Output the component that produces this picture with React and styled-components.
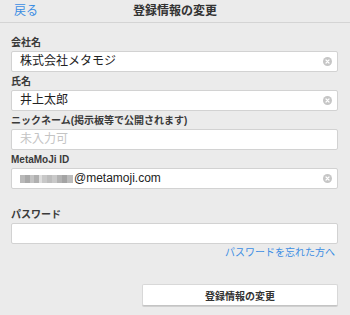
import styled, { createGlobalStyle } from 'styled-components';

const GlobalStyle = createGlobalStyle`
  html, body {
    margin: 0;
    padding: 0;
    background: #ebebeb;
  }
  body {
    font-family: "Liberation Sans", "Noto Sans CJK JP", sans-serif;
    color: #333;
  }
`;

const Page = styled.div`
  width: 350px;
  height: 315px;
  background: #ebebeb;
  overflow: hidden;
`;

const Header = styled.header`
  height: 22px;
  border-bottom: 1px solid #d4d4d4;
  display: grid;
  grid-template-columns: 1fr auto 1fr;
  align-items: center;
  padding: 0 14px;
`;

const BackLink = styled.a`
  font-size: 12px;
  line-height: 22px;
  color: #3b8de3;
  text-decoration: none;
`;

const Title = styled.h1`
  margin: 0;
  font-size: 12px;
  line-height: 22px;
  font-weight: bold;
  color: #333;
`;

const Form = styled.form`
  display: flex;
  flex-direction: column;
  padding: 13px 12px 0 11px;
`;

const Field = styled.div`
  display: flex;
  flex-direction: column;
  margin-top: ${p => p.$gap || 3}px;
  &:first-child {
    margin-top: 0;
  }
`;

const Label = styled.label`
  font-size: 10px;
  line-height: 14px;
  height: 14px;
  font-weight: bold;
  color: #3a3a3a;
  margin-bottom: 1px;
  white-space: nowrap;
`;

const InputBox = styled.div`
  height: 19px;
  background: #fff;
  border: 1px solid #d2d2d2;
  border-radius: 2px;
  display: flex;
  align-items: center;
  padding: 0 5px 0 8px;
  gap: 4px;
`;

const Value = styled.span`
  flex: 1;
  font-size: 12px;
  line-height: 19px;
  color: ${p => (p.$placeholder ? '#c4c4c4' : '#222')};
  white-space: nowrap;
  display: flex;
  align-items: center;
`;

const Mosaic = styled.span`
  display: inline-flex;
  height: 8px;
  margin-right: 1px;
`;

const Cell = styled.span`
  width: ${p => p.$w}px;
  height: 8px;
  background: ${p => p.$c};
`;

const ClearButton = styled.span`
  width: 9px;
  height: 9px;
  flex: none;
  display: flex;
`;

const ForgotLink = styled.a`
  align-self: flex-end;
  margin-top: 2px;
  margin-right: 3px;
  font-size: 10px;
  line-height: 14px;
  color: #3b8de3;
  text-decoration: none;
`;

const SubmitButton = styled.button`
  align-self: flex-end;
  margin-top: 24px;
  width: 196px;
  height: 22px;
  background: #fff;
  border: 1px solid #d8d8d8;
  border-bottom-color: #c4c4c4;
  border-radius: 2px;
  box-shadow: 0 1px 0 #d0d0d0;
  font-family: inherit;
  font-size: 10px;
  font-weight: bold;
  color: #333;
  padding: 0;
`;

const ClearIcon = () => (
  <ClearButton>
    <svg width="9" height="9" viewBox="0 0 9 9">
      <circle cx="4.5" cy="4.5" r="4.5" fill="#c6c6c6" />
      <path d="M3 3 L6 6 M6 3 L3 6" stroke="#fff" strokeWidth="1.2" strokeLinecap="round" />
    </svg>
  </ClearButton>
);

const mosaic = [
  ['#b9b9b9', 5], ['#a9a9a9', 5], ['#c3c3c3', 4], ['#b0b0b0', 5], ['#dedede', 3],
  ['#c8c8c8', 5], ['#bdbdbd', 5], ['#c9c9c9', 5], ['#b3b3b3', 5], ['#a4a4a4', 5], ['#bcbcbc', 6],
];

const TextField = ({ label, value, placeholder, clear, gap, children }) => (
  <Field $gap={gap}>
    <Label>{label}</Label>
    <InputBox>
      <Value $placeholder={!value && !children}>
        {children}
        {value || placeholder}
      </Value>
      {clear && <ClearIcon />}
    </InputBox>
  </Field>
);

export default function App() {
  return (
    <Page>
      <GlobalStyle />
      <Header>
        <BackLink href="#">戻る</BackLink>
        <Title>登録情報の変更</Title>
        <span />
      </Header>
      <Form onSubmit={e => e.preventDefault()}>
        <TextField label="会社名" value="株式会社メタモジ" clear />
        <TextField label="氏名" value="井上太郎" clear />
        <TextField label="ニックネーム(掲示板等で公開されます)" placeholder="未入力可" />
        <TextField label="MetaMoJi ID" value="@metamoji.com" clear>
          <Mosaic>
            {mosaic.map(([c, w], i) => (
              <Cell key={i} $c={c} $w={w} />
            ))}
          </Mosaic>
        </TextField>
        <TextField label="パスワード" gap={19} />
        <ForgotLink href="#">パスワードを忘れた方へ</ForgotLink>
        <SubmitButton type="submit">登録情報の変更</SubmitButton>
      </Form>
    </Page>
  );
}
